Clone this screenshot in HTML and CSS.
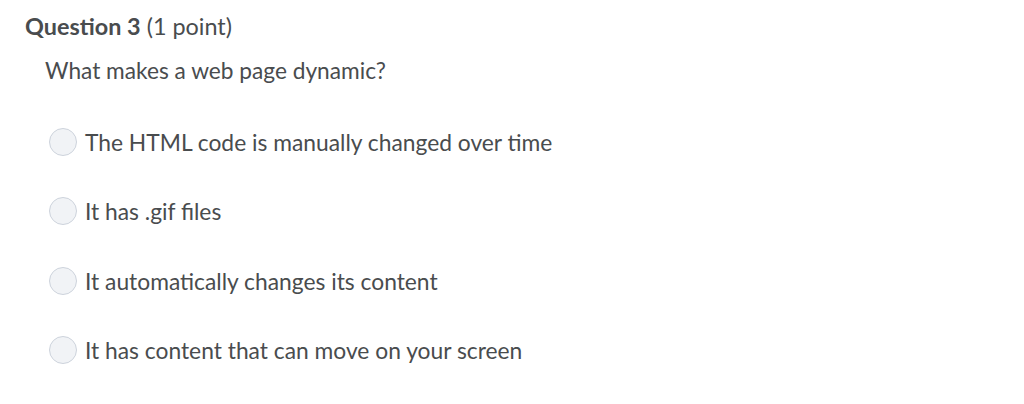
FILE: index.html
```html
<!DOCTYPE html>
<html>
<head>
<meta charset="utf-8">
<link rel="stylesheet" href="styles.css">
</head>
<body>
<div class="question">
  <h2 class="q-title"><span class="q-num">Question 3</span> (1 point)</h2>
  <p class="q-text">What makes a web page dynamic?</p>
  <div class="options">
    <label class="option"><span class="radio"></span><span class="opt-text">The HTML code is manually changed over time</span></label>
    <label class="option"><span class="radio"></span><span class="opt-text">It has .gif files</span></label>
    <label class="option"><span class="radio"></span><span class="opt-text">It automatically changes its content</span></label>
    <label class="option"><span class="radio"></span><span class="opt-text">It has content that can move on your screen</span></label>
  </div>
</div>
</body>
</html>
```

FILE: styles.css
```css
html, body {
  margin: 0;
  padding: 0;
  background: #ffffff;
}
body {
  font-family: Lato, "Open Sans", sans-serif;
  color: #494c4e;
}
.question {
  padding: 12px 0 0 25px;
}
.q-title {
  margin: 0;
  font-size: 23.4px;
  font-weight: 400;
  line-height: 28px;
  color: #494c4e;
}
.q-num {
  font-weight: 700;
}
.q-text {
  margin: 17px 0 0 20px;
  font-size: 22.7px;
  line-height: 28px;
}
.options {
  display: flex;
  flex-direction: column;
  margin: 22px 0 0 24px;
}
.option {
  display: flex;
  align-items: center;
  gap: 8px;
  height: 69.5px;
  font-size: 22.8px;
}
.radio {
  width: 26px;
  height: 26px;
  border: 1px solid #cdd3dc;
  border-radius: 50%;
  background: #f1f3f6;
  flex: none;
}
.opt-text {
  line-height: 28px;
}
```
